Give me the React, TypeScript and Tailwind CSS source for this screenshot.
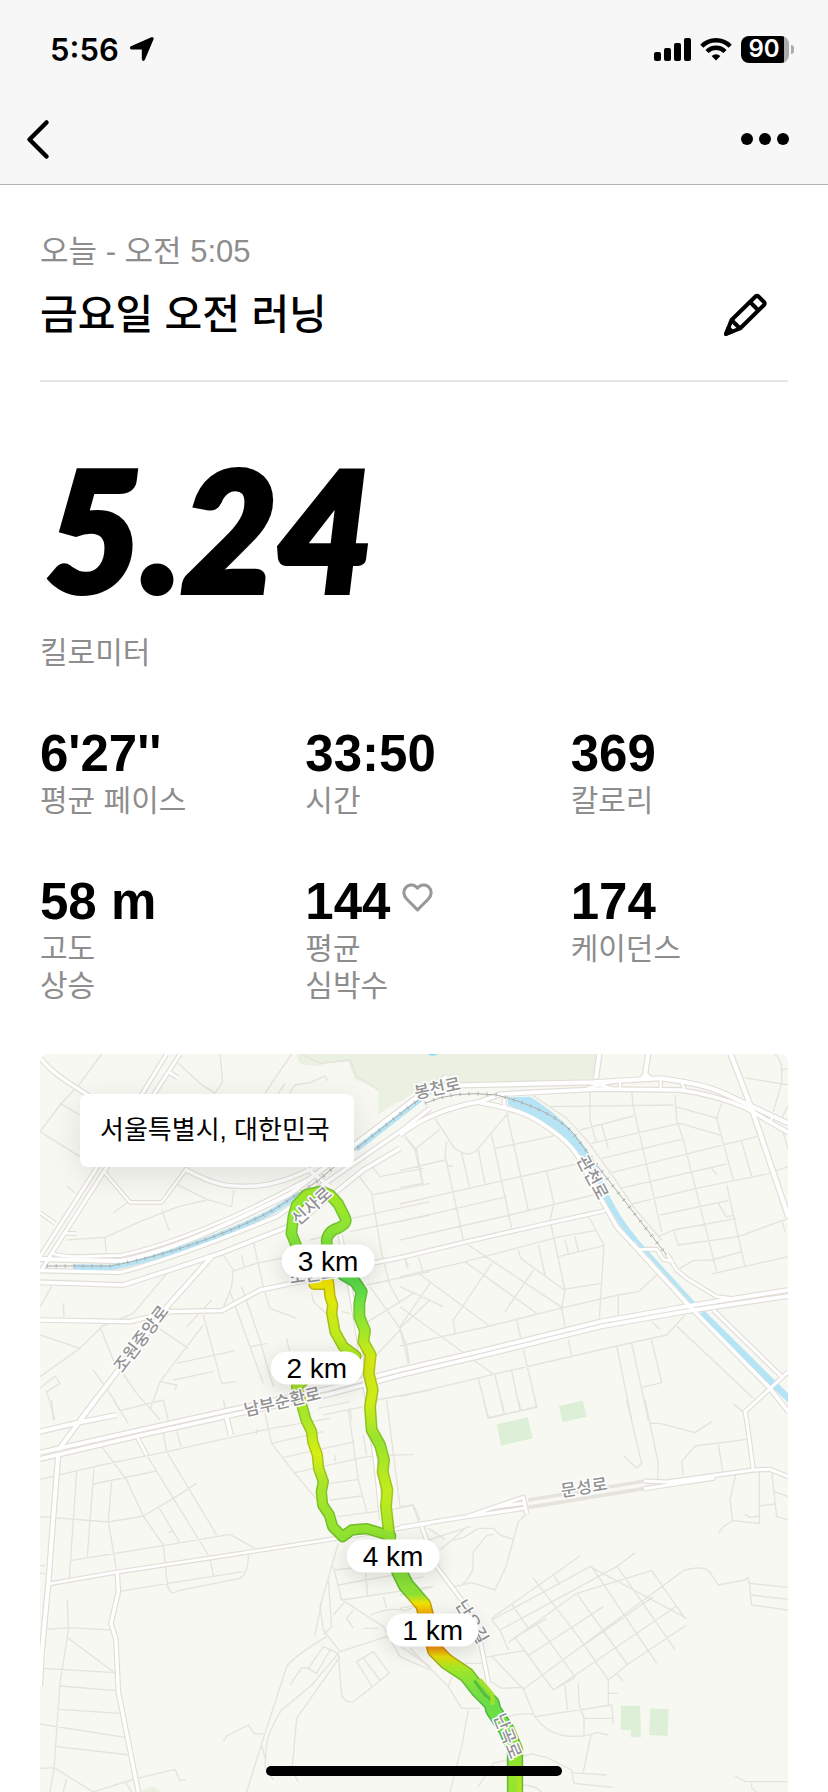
import type { ReactNode } from "react";

type Tile = { x: number; y: number };
type Road = { tile: Tile; d: string; w: number };

const NW: Tile = { x: -30, y: -42 };
const NE: Tile = { x: 1080, y: -42 };
const SW: Tile = { x: -30, y: 1038 };
const SE: Tile = { x: 1080, y: 1038 };

const at = (t: Tile) => `translate(${t.x} ${t.y})`;

const lanes: { tile: Tile; d: string }[] = [
  {
    tile: NW,
    d: `M215 42L150 130L90 195L30 275M165 165L150 140M90 190L150 225M30 275L150 350M570 42L578 125L555 160M445 70L510 130L555 160M785 42L745 100L705 160M765 130L745 160M778 160L795 135L840 128L885 108L892 122
    M135 458L110 438M225 592L228 635M110 600L225 592L330 545L445 500L530 480M440 432L530 478L605 500M605 500L612 450M395 510L418 572M250 518L295 485
    M820 45L870 70L960 60L980 110L1045 150
    M670 605L700 740L720 805L800 835M580 645L610 690L605 740L575 815M605 695L680 670L800 645M635 645L642 680M635 740L690 900L712 980L730 1040M600 755L660 920L700 1030M520 825L555 955L575 1030L620 1025M415 695L310 820L215 860L150 925L30 1010
    M210 860L250 960L320 1060L390 1140M30 885L150 925M520 855L470 920L390 1025L360 1110M365 850L475 925M545 780L470 860M440 970L615 932M430 1020L550 995M390 1025L440 1035L435 1050M190 990L250 1075L270 1112M30 1045L75 1008L90 1030L50 1055L75 1140M270 1112L400 1080M660 920L712 910M770 895L780 940L860 1010M845 760L850 785L900 830M935 815L960 820M100 790L102 830M65 740L30 800
    M985 405L1025 460L1055 640L1080 735L1110 790M1125 290L1160 330L1180 440M1020 370L1050 410L1180 385M1025 465L1200 430M965 535L1200 485M960 575L1200 525M1010 735L1200 695M1020 740L1110 865L1200 780M1110 865L1135 970M990 860L1150 760M1035 950L1110 870M1125 655L1132 685M840 600L900 585M960 1105L965 1140M1040 1080L1200 1050M880 1125L1000 1100`,
  },
  {
    tile: NE,
    d: `M105 235L160 320Q205 360 235 325L325 218M320 218L345 330L385 510M275 285L335 565M285 325L460 288L480 275M140 305L135 345L190 600M15 290L45 330L68 430L0 442M45 328L120 268M0 392L135 360M140 378H160M185 340L208 440M235 330L255 432
    M0 492L140 460L530 372M0 545L320 470M0 600L330 525L580 465M440 395L462 490L450 540L495 750L485 805L495 860M390 160L500 235L560 300L640 410L700 500L785 600M570 155V240L588 305M540 270L700 228M605 255L625 325M575 310L840 250L960 285M695 155L700 200L785 575M825 165L830 240L850 300L950 695M825 200L955 235M450 200L820 195M965 190L950 235L1000 420M605 355L845 298M625 400L1070 290M660 445L980 372M695 492L890 445L1110 400M1025 305L1055 408M935 385L950 405M780 525L985 482M955 490L978 530L998 527M980 435L1035 680M775 590L820 570L1010 535M820 570L835 615L1015 590L1165 535M1145 540L1155 575M840 685L880 662L935 660L1025 635M935 702L1165 650M1105 400L1165 380
    M1125 42Q1145 60 1145 90V130L1120 215M1035 113L1165 135M1145 90L1165 85M1165 195L1145 235M1150 280L1165 330
    M565 528L612 615L598 835M195 665L480 590L585 572M475 650L612 617M495 598L505 640M525 590L535 635M355 630L362 655L490 748L605 730M415 615L435 705M205 615L490 805M400 690L315 815M275 670L160 840L165 880M195 665L410 820M55 700L265 855M90 730L0 860M0 740L130 800M0 710L200 665M0 800L280 1003M0 918L270 858L480 805L655 765L715 755L770 705M655 765V825M350 840L362 893M0 865L20 920L28 970M505 900L515 945M370 930L410 1100L265 1135L235 1015M285 1005L312 1120M335 993L360 1110M0 1070L280 1003L650 918L800 885L855 825M650 918L695 1140M695 910L745 1140M755 900L785 1028L727 1042M755 845L780 868M830 858L1060 1075M1000 1092L1035 1120M15 655L25 680M55 650L68 692`,
  },
  {
    tile: SW,
    d: `M65 0L70 60M30 238L215 195L410 155L725 85L900 55M215 140L290 240L340 348L400 435L412 555Q420 590 445 572L630 535Q655 520 655 465M400 100L410 155L560 405M440 92L453 140M350 165L430 295L535 465M190 252L380 213M140 215L118 535M192 205L172 470M245 245L235 365L260 515M30 350L235 366L340 348L430 295L500 250M120 482L400 437L600 403L675 445M385 320L448 425M415 398L430 393M265 575L415 550L640 515M540 475L550 528M30 497H45M30 520H45M400 0L415 60M580 0L588 35M250 0L295 70M680 88V103M705 40L725 130L790 215L870 310
    M725 130L880 95M760 172L975 125M795 218L1010 170L1150 163M900 250L985 238M900 300L995 288M920 350L1090 328L1150 315L1170 360M955 30L985 240L1010 335M1000 105L1010 165M915 165V185M1070 0L1110 320M865 25L960 5
    M112 598L115 690L90 850L72 1105L60 1176M45 688L115 683L245 690M115 715L250 815M40 805L255 818M90 858L260 872M88 928L270 940M30 972L285 1012M80 1040L300 1065M30 1105L72 1103L190 1176L320 1135L435 1108L450 1142L467 1140M110 1135L100 1176M285 1145L305 1176
    M925 430L870 620L880 690L930 755L1070 710L1200 800M895 540L905 680L880 705M875 605L855 705M910 500L935 600L1200 560M925 555L1200 505M915 510L1005 500M1005 500L1013 590M945 605L910 645M945 605L1060 680L1110 770L1200 810M970 630L950 655L970 685M1000 685H1045M1060 590L1070 625M1020 645Q1080 620 1125 632L1200 605
    M890 710Q790 770 770 800L695 1030L650 1176M925 760L845 855L755 930Q710 1000 708 1050L705 1100L730 1140M930 770L800 955L790 1070L785 1110L805 1145M925 760L935 885Q945 910 970 905L1078 820L1030 755L980 785L1025 858M1000 775L1050 840M780 855L815 803L835 805L880 740L925 760M835 805L860 820L900 750M695 1035L705 1075M580 1025L590 1008L655 975L675 1003L700 1000`,
  },
  {
    tile: SE,
    d: `M250 0L265 53L410 22L405 0M305 0L312 40M355 0L362 30M680 0L725 190L710 205L672 168M735 0L775 190L773 240M750 70L780 70L885 98L935 65M1000 12L1035 40M1040 118L885 138L845 185L850 225M955 133L968 215M1008 220L990 300L998 362L1078 370V210M998 362L970 380L955 400M1078 318L1125 312M1115 215L1130 350L1165 360M1122 275L1165 290M1035 343L1050 352L1078 348
    M0 320L38 315L60 375M380 340L355 365L318 500L285 570L215 548L160 560M85 420L210 380M158 420L190 413L235 385H280L300 405L340 418M280 403L260 407L220 455L218 510Q205 540 180 560M85 385L135 418M120 450L190 390M0 545L70 530M0 585L100 560M0 625L50 615
    M275 660L570 500L860 655M275 660L300 690L325 750M275 655L540 468M300 690L650 500L705 458M325 728L530 580L755 512L855 655M345 712L440 655M388 765L610 620M335 612L385 685M398 532L535 710L625 840M345 712L460 870L830 618M458 522L480 555M530 580L683 795M408 670L525 830M575 500L770 790M652 500L825 748M370 868L720 608L850 512Q920 490 935 525L955 555L1035 540L1043 532L1048 550L1165 562M545 740L760 590M1048 550L1055 615L1165 630M1052 585L1165 598M460 870L525 832M625 840L680 795L860 675M650 820L668 843
    M255 772L370 752L388 765M275 768L370 868L405 950L635 915L640 972M265 840L305 865L370 862M325 950Q340 940 400 942M535 850L537 912L552 955V1005M495 855L502 930M625 840V915M625 880H653M552 955H638M405 950Q440 1000 500 1008Q560 1012 590 997L625 1005M573 1005L550 1115M30 745L145 860L185 925H240M205 930L185 1040L150 1176M155 830L145 860M185 790H250M235 1160L280 1090L395 1062L440 1072L515 1110L522 1150L638 1162M515 1118L620 1125M340 1155Q400 1150 425 1176M1005 1128L1035 1145H1165M1055 1148V1165L1070 1176`,
  },
];

const streets: Road[] = [
  { tile: NW, w: 10, d: "M32 55C70 105 130 135 180 170" },
  { tile: NW, w: 9, d: "M410 42L190 400L30 650M450 42L222 395L65 640L35 690M415 95L443 113" },
  { tile: NW, w: 7, d: "M222 395L300 487H395L470 385M100 580H140M30 518L75 550" },
  { tile: NW, w: 10, d: "M465 388C560 440 600 442 680 438C760 430 810 400 850 385M830 385L900 440" },
  { tile: NW, w: 12, d: "M30 657L270 663C400 640 560 570 780 462L1160 172L1250 110" },
  { tile: NW, w: 8, d: "M65 640C120 658 200 645 270 647C400 620 600 545 830 420" },
  { tile: NW, w: 10, d: "M30 692L270 697C400 665 580 595 740 530L1110 275L1200 205" },
  { tile: NW, w: 11, d: "M30 727L280 735L420 690L570 640L800 550L1000 390L1110 325" },
  { tile: NW, w: 10, d: "M30 840L300 845L420 815L575 812L690 750L860 715L1010 673L1110 653" },
  { tile: NW, w: 12, d: "M545 650L420 790L150 1140" },
  { tile: NW, w: 9, d: "M930 585L945 650L985 890L1035 1250L1055 1440" },
  { tile: NE, w: 12, d: "M50 170Q90 140 180 136L580 127L780 115Q900 130 960 155L1165 250" },
  { tile: NE, w: 11, d: "M0 285C60 235 150 200 240 185L300 163L400 157L600 147L840 150Q950 165 1040 205L1165 278" },
  { tile: NE, w: 12, d: "M598 42L588 115M745 42L735 105L725 115M735 100L750 115" },
  { tile: NE, w: 7, d: "M660 118V145M782 118V145M845 130L855 150M560 127L640 145M560 145L640 125M1040 185L1030 205M1120 225L1110 245" },
  { tile: NE, w: 13, d: "M992 42L1060 220L1165 530" },
  { tile: NE, w: 11, d: "M240 188C330 205 380 215 440 260C500 300 530 330 560 400L650 560L710 625L870 800L1110 1045L1165 1115" },
  { tile: NE, w: 9, d: "M318 170Q305 185 318 205M0 653L200 605L420 555L615 512" },
  { tile: NE, w: 8, d: "M710 628H770L790 658L820 665M800 640L830 690L860 715L950 770L990 775" },
  { tile: NE, w: 9, d: "M940 810L1145 1010M1165 995L1035 1115L1040 1140L1060 1290" },
  { tile: NE, w: 11, d: "M0 990L230 936L600 845L870 797L1165 750" },
  { tile: NE, w: 11, d: "M0 1006L230 951L600 860L870 812L1165 768" },
  { tile: SW, w: 11, d: "M30 158L320 92L590 32L900 -35L1110 -90" },
  { tile: SW, w: 11, d: "M30 177L320 109L590 49L900 -18L1110 -74" },
  { tile: SW, w: 12, d: "M85 160L70 350L55 550L35 760L30 860M200 -5L85 150M30 95L135 70L260 45" },
  { tile: SW, w: 8, d: "M55 552L250 518L600 465L940 412L1200 370" },
  { tile: SW, w: 10, d: "M262 520L265 575L243 670L258 720L265 875L325 1176" },
  { tile: SW, w: 8, d: "M318 105L350 165" },
  { tile: SW, w: 12, d: "M588 45L602 105" },
  { tile: SE, w: 9, d: "M0 382L200 350L370 292L380 340M200 350L372 325M280 322L370 310" },
  { tile: SE, w: 9, d: "M732 243L800 246L1060 210L1110 208L1165 230M732 266L940 235L800 246" },
  { tile: SE, w: 9, d: "M65 380L110 500L200 620L240 720L265 845" },
];

const loop = "M893 720L890 600Q895 572 925 564Q955 550 945 532L925 492L900 464L870 454L830 464L800 495L790 530L784 580L800 620";
const eastLeg =
  "M940 705L975 725L995 755L988 790L988 830L1005 872L1000 905L1022 945L1016 1000L1028 1050L1020 1100L1025 1170L1050 1215L1062 1260L1058 1295L1072 1350L1068 1400L1080 1505";
const westLeg =
  "M852 733H880M896 728L900 770L908 795L905 820L915 875L940 920L978 948L900 955L800 1040L818 1105L828 1140L845 1175L848 1205L862 1245L866 1285L880 1325L874 1355L878 1395L898 1425L908 1460L938 1490L965 1470L1010 1466L1050 1478L1082 1488";
const southLeg =
  "M1108 1595L1128 1635L1150 1660L1180 1695L1190 1735L1215 1830L1250 1865L1310 1905L1345 1950L1385 1990L1390 2010L1430 2070L1455 2130L1455 2260";

const legs = [
  { d: loop, paint: "url(#loop)", edge: "#74c32e", w: 26 },
  { d: eastLeg, paint: "url(#east)", edge: "url(#eastEdge)", w: 27 },
  { d: westLeg, paint: "url(#west)", edge: "url(#westEdge)", w: 25 },
  { d: southLeg, paint: "url(#south)", edge: "url(#southEdge)", w: 40 },
];

function Ramp({ id, from, to, stops }: { id: string; from: number; to: number; stops: [number, string][] }) {
  return (
    <linearGradient id={id} gradientUnits="userSpaceOnUse" x1="0" x2="0" y1={from} y2={to}>
      {stops.map(([y, color]) => (
        <stop key={y} offset={(y - from) / (to - from)} stopColor={color} />
      ))}
    </linearGradient>
  );
}

const streetNames = [
  { name: "봉천로", x: 1192, y: 103, r: -12 },
  { name: "관천로", x: 1658, y: 370, r: 62 },
  { name: "신사로", x: 815, y: 456, r: -42 },
  { name: "조원로", x: 818, y: 662, r: -8 },
  { name: "조원중앙로", x: 303, y: 855, r: -53 },
  { name: "남부순환로", x: 727, y: 1043, r: -13 },
  { name: "문성로", x: 1632, y: 1300, r: -9 },
  { name: "난우길", x: 1296, y: 1703, r: 60 },
  { name: "난곡로", x: 1403, y: 2046, r: 68 },
];

const rails: Road[] = [
  { tile: NW, w: 3, d: "M50 678H240C400 650 600 580 730 510L860 425L980 325L1150 190L1200 165" },
  { tile: NE, w: 3, d: "M75 190Q160 150 290 165Q450 205 520 280L590 375L800 645" },
];

function RouteMap() {
  return (
    <svg viewBox="0 0 2244 2214" className="block w-full" role="img" aria-label="러닝 경로">
      <defs>
        <Ramp id="loop" from={440} to={720} stops={[[440, "#a2e62a"], [520, "#98e62c"], [620, "#7de03c"], [720, "#a8e628"]]} />
        <Ramp id="east" from={700} to={1510} stops={[[700, "#5bdc4c"], [760, "#62dc48"], [860, "#9be62c"], [960, "#d6ea14"], [1090, "#cdec18"], [1200, "#98e42e"], [1350, "#c2ec1c"], [1510, "#a0e42a"]]} />
        <Ramp id="eastEdge" from={700} to={1510} stops={[[700, "#46b83e"], [860, "#80c528"], [960, "#b7c414"], [1200, "#7fc028"], [1350, "#a4c81c"], [1510, "#84c026"]]} />
        <Ramp id="west" from={720} to={1500} stops={[[720, "#f8e800"], [800, "#d8e80e"], [880, "#c0ea1c"], [960, "#a6e828"], [1130, "#a8e628"], [1240, "#d8ee12"], [1330, "#a8e628"], [1500, "#8ee232"]]} />
        <Ramp id="westEdge" from={720} to={1500} stops={[[720, "#c6b80c"], [880, "#9cc01c"], [1130, "#88c424"], [1240, "#b4c414"], [1330, "#86c226"], [1500, "#70bc2c"]]} />
        <Ramp id="south" from={1590} to={2260} stops={[[1590, "#82e03a"], [1665, "#90e232"], [1690, "#f4e400"], [1730, "#f0980c"], [1820, "#f08c0c"], [1850, "#e8dc08"], [1885, "#a4e628"], [1950, "#78e040"], [2000, "#68de46"], [2130, "#80e238"], [2190, "#9ce42c"], [2260, "#94e430"]]} />
        <Ramp id="southEdge" from={1590} to={2260} stops={[[1590, "#5fb436"], [1665, "#6cb830"], [1690, "#c8ac0c"], [1730, "#cc7410"], [1820, "#cc7410"], [1850, "#b8a80c"], [1900, "#76bc2c"], [2000, "#4cb440"], [2260, "#6cb834"]]} />
      </defs>
      <rect width="2244" height="2214" fill="#f7f8f2" />
      <g transform={at(NW)}>
        <path d="M800 42L805 65L820 75L870 78L890 70L955 65L975 120Q1040 135 1045 152V225L1110 180V42Z" fill="#eaf0e2" />
      </g>
      <g transform={at(NE)}>
        <path d="M-5 42H595L588 120L170 130L60 145L-5 190Z" fill="#eaf0e2" />
        <path d="M82 42H115Q98 52 82 42Z" fill="#8fd8f4" />
      </g>
      <g transform={at(SE)} fill="#deefd8">
        <path d="M290 73L383 52L398 115L303 137ZM477 18L548 2L561 50L487 67ZM663 917H720L723 1012H693V990H662ZM751 925L806 928L803 1008L747 1005Z" />
      </g>
      <path d="M300 2214L335 2196L365 2214Z" fill="#eaf0e2" />

      <g fill="none" strokeLinejoin="round">
        {lanes.map((l) => (
          <path key={l.d} transform={at(l.tile)} d={l.d} stroke="#e6e2dc" strokeWidth="4" />
        ))}
        <path transform={at(SE)} d="M385 300L735 243M385 322L735 265" stroke="#e6e2dc" strokeWidth="11" />
        {streets.map((s) => (
          <path key={s.d} transform={at(s.tile)} d={s.d} stroke="#e2ded7" strokeWidth={s.w + 7} />
        ))}
        <g stroke="#b7e4f4">
          <path transform={at(NW)} d="M130 681L240 683C400 652 600 582 730 512L810 462M978 328L1155 190L1200 155" strokeWidth="17" />
          <path transform={at(NE)} d="M330 185Q460 215 580 380L620 465" strokeWidth="18" />
          <path transform={at(NE)} d="M322 172L390 170C450 205 530 270 590 375L570 360C530 310 440 240 325 195Z" fill="#b7e4f4" stroke="none" />
          <path transform={at(NE)} d="M615 462Q660 550 705 600" strokeWidth="18" />
          <path transform={at(NE)} d="M700 592L885 795" strokeWidth="11" />
          <path transform={at(NE)} d="M905 818L1175 1085" strokeWidth="20" />
        </g>
        {streets.map((s) => (
          <path key={s.d} transform={at(s.tile)} d={s.d} stroke="#ffffff" strokeWidth={s.w} />
        ))}
        {rails.map((r) => (
          <g key={r.d} transform={at(r.tile)} stroke="#adadad">
            <path d={r.d} strokeWidth={r.w} />
            <path d={r.d} strokeWidth="11" strokeDasharray="3 24" />
          </g>
        ))}
      </g>

      <g transform={at(NW)} fill="none" strokeLinejoin="round" strokeLinecap="round">
        {legs.map((l) => (
          <path key={l.d} d={l.d} stroke={l.edge} strokeWidth={l.w + 9} />
        ))}
        {legs.map((l) => (
          <path key={l.d} d={l.d} stroke={l.paint} strokeWidth={l.w} />
        ))}
        <path d="M1335 1925L1365 1965L1385 1980" stroke="#58bc3c" strokeWidth="9" />
        <path d="M1352 1922L1386 1962L1388 1990" stroke="#a4e02c" strokeWidth="12" />
        <path d="M1468 2215V2260" stroke="#b2e426" strokeWidth="12" />
      </g>

      <g
        className="font-['Noto_Sans_CJK_KR',sans-serif] font-medium"
        fontSize="51"
        fill="#929292"
        stroke="#ffffff"
        strokeWidth="9"
        strokeLinejoin="round"
        paintOrder="stroke"
        textAnchor="middle"
      >
        {streetNames.map((s) => (
          <text key={s.name} transform={`translate(${s.x} ${s.y}) rotate(${s.r})`} dy="18">
            {s.name}
          </text>
        ))}
      </g>
    </svg>
  );
}

function Stat({ value, label, icon }: { value: string; label: string[]; icon?: ReactNode }) {
  return (
    <div>
      <dd className="flex items-center gap-3 text-[51px] leading-[57px] font-bold text-black">
        {value}
        {icon}
      </dd>
      <dt className="text-[30px] leading-[37px] text-[#8d8d8d]">
        {label.map((line) => (
          <span key={line} className="block">
            {line}
          </span>
        ))}
      </dt>
    </div>
  );
}

function Heart() {
  return (
    <svg viewBox="0 0 30 28" className="mb-2 w-[31px]" fill="none" stroke="#999999" strokeWidth="3" strokeLinejoin="round" aria-hidden="true">
      <path d="M15 26L4.500 15.500C1 12 1 7 4 4C7 1 12 1 15 5C18 1 23 1 26 4C29 7 29 12 25.500 15.500Z" />
    </svg>
  );
}

function KmPin({ text, place }: { text: string; place: string }) {
  return (
    <span
      className={`absolute -translate-x-1/2 -translate-y-1/2 rounded-full bg-white px-4 text-[28px] leading-[33px] whitespace-nowrap text-black shadow-[0_4px_20px_rgba(0,0,0,0.14)] ${place}`}
    >
      {text}
    </span>
  );
}

function StatusBar() {
  return (
    <div className="flex h-[98px] items-center justify-between pr-[34px] pl-[50px]">
      <div className="flex items-center gap-[11px] font-['Inter',sans-serif] text-[31px] leading-none font-semibold">
        5:56
        <svg viewBox="0 0 24 24" className="w-6" aria-hidden="true">
          <path
            d="M22.500 2.200L14.200 21.800C13.600 23.400 12.800 23.300 12.800 21.800V11.600H2C0.600 11.600 0.500 10.600 1.900 10L21.200 1.300C22.400 0.800 23 1.300 22.500 2.200Z"
            stroke="black"
            strokeWidth="2"
            strokeLinejoin="round"
          />
        </svg>
      </div>
      <div className="flex items-center gap-[9px]">
        <svg viewBox="0 0 37 24" className="w-[37px]" aria-hidden="true">
          <rect x="0" y="15" width="7" height="9" rx="2" />
          <rect x="10" y="11" width="7" height="13" rx="2" />
          <rect x="20" y="6" width="7" height="18" rx="2" />
          <rect x="30" y="1" width="7" height="23" rx="2" />
        </svg>
        <svg viewBox="0 0 32 24" className="w-8" fill="none" stroke="black" strokeWidth="4.400" aria-hidden="true">
          <path d="M1.800 9.200A20 20 0 0 1 30.200 9.200" />
          <path d="M7 14.500A12.800 12.800 0 0 1 25 14.500" />
          <path d="M16 23.500L11.600 19A6.500 6.500 0 0 1 20.400 19Z" fill="black" stroke="none" />
        </svg>
        <div className="flex items-center gap-[2px]">
          <span className="flex h-[27px] w-12 items-center justify-center rounded-lg bg-[linear-gradient(90deg,#000_90%,#acacac_90%)] pr-[2px] font-['Inter',sans-serif] text-[24px] leading-none font-semibold text-white">
            90
          </span>
          <span className="h-[9px] w-[3px] rounded-r-full bg-[#acacac]" />
        </div>
      </div>
    </div>
  );
}

export default function App() {
  return (
    <div className="min-h-screen bg-white font-['Liberation_Sans','Noto_Sans_CJK_KR',sans-serif] text-black">
      <header className="border-b border-[#b2b2b2] bg-[#f7f7f7]">
        <StatusBar />
        <nav className="flex h-[86px] items-center justify-between pr-[38px] pb-1 pl-[24px]">
          <button type="button" aria-label="뒤로">
            <svg viewBox="0 0 28 42" className="w-7" fill="none" stroke="black" strokeWidth="4.500" strokeLinecap="round" strokeLinejoin="round">
              <path d="M22.500 4.500L5.500 21.500L22.500 38.500" />
            </svg>
          </button>
          <button type="button" aria-label="더보기">
            <svg viewBox="0 0 50 14" className="w-[50px]">
              <circle cx="7" cy="7" r="6" />
              <circle cx="25" cy="7" r="6" />
              <circle cx="43" cy="7" r="6" />
            </svg>
          </button>
        </nav>
      </header>

      <main className="px-10">
        <section className="flex items-end justify-between border-b-2 border-[#e5e5e5] pt-[45px] pb-[34px]">
          <div>
            <p className="text-[31px] leading-[44px] text-[#8d8d8d]">오늘 - 오전 5:05</p>
            <h1 className="mt-[10px] text-[41px] leading-[62px] font-medium">금요일 오전 러닝</h1>
          </div>
          <button type="button" aria-label="이름 편집" className="mr-5 mb-2">
            <svg viewBox="0 0 46 46" className="w-[46px]" fill="none" stroke="black" strokeWidth="4" strokeLinejoin="round">
              <path d="M4 42L9.500 28L33.500 4.500Q35 3 36.500 4.500L42 10Q43.500 11.500 42 13L18 36.500Z" />
              <path d="M28 10L36.500 18.500M9.500 28L18 36.500" />
              <path d="M4 42L6.500 36L10 39.500Z" fill="black" />
            </svg>
          </button>
        </section>

        <section className="pt-[62px]">
          <p className="pl-[6px] font-['Lato',sans-serif] text-[165px] leading-[168px] font-black italic [-webkit-text-stroke:6px_black]">5.24</p>
          <p className="mt-[19px] text-[30px] leading-[44px] text-[#8d8d8d]">킬로미터</p>
        </section>

        <dl className="mt-[50px] grid grid-cols-3 gap-x-12 gap-y-[54px]">
          <Stat value="6'27''" label={["평균 페이스"]} />
          <Stat value="33:50" label={["시간"]} />
          <Stat value="369" label={["칼로리"]} />
          <Stat value="58 m" label={["고도", "상승"]} />
          <Stat value="144" label={["평균", "심박수"]} icon={<Heart />} />
          <Stat value="174" label={["케이던스"]} />
        </dl>

        <section className="relative mt-[50px] overflow-hidden rounded-t-lg">
          <RouteMap />
          <p className="absolute top-10 left-10 rounded-lg bg-white pr-6 pl-5 text-[26px] leading-[73px] text-black shadow-[0_8px_32px_rgba(0,0,0,0.1)]">
            서울특별시, 대한민국
          </p>
          <KmPin text="3 km" place="top-[28%] left-[38.5%]" />
          <KmPin text="2 km" place="top-[42.5%] left-[37%]" />
          <KmPin text="4 km" place="top-[68%] left-[47.2%]" />
          <KmPin text="1 km" place="top-[78%] left-[52.5%]" />
        </section>
      </main>

      <div className="fixed inset-x-0 bottom-4 flex justify-center">
        <span className="h-[10px] w-[296px] rounded-full bg-black" />
      </div>
    </div>
  );
}
